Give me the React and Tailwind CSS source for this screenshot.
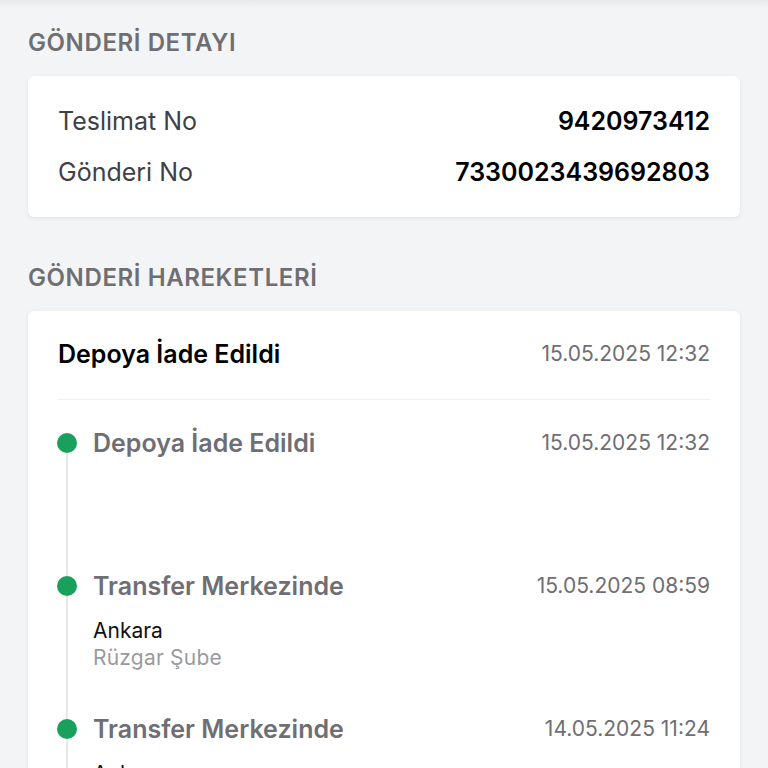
import React from "react";

const items = [
  { title: "Depoya İade Edildi", date: "15.05.2025 12:32" },
  { title: "Transfer Merkezinde", date: "15.05.2025 08:59", city: "Ankara", branch: "Rüzgar Şube" },
  { title: "Transfer Merkezinde", date: "14.05.2025 11:24", city: "Ankara", branch: "Rüzgar Şube" },
  { title: "Şubede", date: "14.05.2025 09:10", city: "Ankara", branch: "Rüzgar Şube" },
];

export default function App() {
  return (
    <div className="min-h-screen bg-[#f3f4f6] overflow-hidden" style={{ fontFamily: "Inter, 'Noto Sans', sans-serif" }}>
      <div className="h-[8px] bg-gradient-to-b from-[#e8e9eb] to-[#f3f4f6]" />
      <div className="px-7 pt-[20px]">
        <h2 className="text-[24px] leading-[30px] font-semibold text-[#6e6e73] tracking-[0.6px]">GÖNDERİ DETAYI</h2>
        <div className="mt-[18px] bg-white rounded-[6px] shadow-[0_1px_4px_rgba(0,0,0,0.08)] px-[30px] py-[28px] flex flex-col gap-[17px]">
          <div className="flex justify-between items-center leading-[34px]">
            <span className="text-[25px] text-[#3f3f46]">Teslimat No</span>
            <span className="text-[25px] font-semibold text-black">9420973412</span>
          </div>
          <div className="flex justify-between items-center leading-[34px]">
            <span className="text-[25px] text-[#3f3f46]">Gönderi No</span>
            <span className="text-[25px] font-semibold text-black">7330023439692803</span>
          </div>
        </div>

        <h2 className="mt-[46px] text-[24px] leading-[30px] font-semibold text-[#6e6e73] tracking-[0.6px]">GÖNDERİ HAREKETLERİ</h2>
        <div className="mt-[18px] bg-white rounded-[6px] shadow-[0_1px_4px_rgba(0,0,0,0.08)] px-[30px]">
          <div className="flex justify-between items-center pt-[27px] pb-[29px] border-b border-[#f0f0f2]">
            <span className="text-[25px] leading-[32px] font-semibold text-black">Depoya İade Edildi</span>
            <span className="text-[21px] leading-[32px] text-[#6e6e73]">15.05.2025 12:32</span>
          </div>
          <div className="pt-[28px]">
            {items.map((it, i) => (
              <div key={i} className="flex min-h-[143px]">
                <div className="flex flex-col items-center w-[20px] shrink-0 -ml-[1px]">
                  <div className={"h-[5px] w-[2px] " + (i === 0 ? "bg-transparent" : "bg-[#e5e7eb]")} />
                  <div className="w-[20px] h-[20px] rounded-full bg-[#18a05c]" />
                  <div className="flex-1 w-[2px] bg-[#e5e7eb]" />
                </div>
                <div className="flex-1 ml-[16px]">
                  <div className="flex justify-between items-center">
                    <span className="text-[25px] leading-[30px] font-semibold text-[#6e6e73]">{it.title}</span>
                    <span className="text-[21px] leading-[30px] text-[#6e6e73]">{it.date}</span>
                  </div>
                  {it.city && (
                    <div className="mt-[16px]">
                      <div className="text-[21px] leading-[27px] text-[#111111]">{it.city}</div>
                      <div className="text-[21px] leading-[27px] tracking-[0.2px] text-[#9a9a9e]">{it.branch}</div>
                    </div>
                  )}
                </div>
              </div>
            ))}
          </div>
        </div>
      </div>
    </div>
  );
}
